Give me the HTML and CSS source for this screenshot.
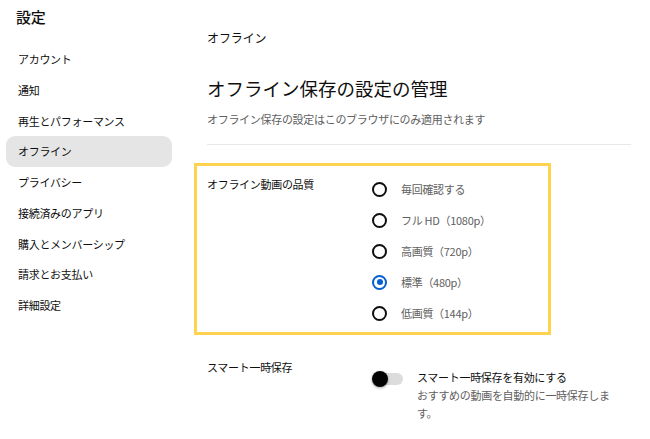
FILE: index.html
```html
<!DOCTYPE html>
<html lang="ja">
<head>
<meta charset="utf-8">
<link rel="stylesheet" href="styles.css">
</head>
<body>
<nav class="sidebar">
  <div class="side-title">設定</div>
  <ul class="menu">
    <li class="item">アカウント</li>
    <li class="item">通知</li>
    <li class="item">再生とパフォーマンス</li>
    <li class="item active">オフライン</li>
    <li class="item">プライバシー</li>
    <li class="item">接続済みのアプリ</li>
    <li class="item">購入とメンバーシップ</li>
    <li class="item">請求とお支払い</li>
    <li class="item">詳細設定</li>
  </ul>
</nav>
<main class="main">
  <div class="crumb">オフライン</div>
  <h1 class="heading">オフライン保存の設定の管理</h1>
  <p class="sub">オフライン保存の設定はこのブラウザにのみ適用されます</p>
  <hr class="divider">
  <section class="quality">
    <div class="label">オフライン動画の品質</div>
    <div class="options">
      <div class="opt"><span class="radio"></span><span class="opt-text">毎回確認する</span></div>
      <div class="opt"><span class="radio"></span><span class="opt-text">フル HD（1080p）</span></div>
      <div class="opt"><span class="radio"></span><span class="opt-text">高画質（720p）</span></div>
      <div class="opt"><span class="radio checked"></span><span class="opt-text">標準（480p）</span></div>
      <div class="opt"><span class="radio"></span><span class="opt-text">低画質（144p）</span></div>
    </div>
  </section>
  <section class="smart">
    <div class="label">スマート一時保存</div>
    <div class="smart-right">
      <span class="toggle"><span class="knob"></span></span>
      <div class="smart-text">
        <div class="smart-title">スマート一時保存を有効にする</div>
        <div class="smart-desc">おすすめの動画を自動的に一時保存します。</div>
      </div>
    </div>
  </section>
</main>
</body>
</html>
```
FILE: styles.css
```css
html, body {
  margin: 0;
  padding: 0;
  background: #fff;
}
body {
  display: flex;
  font-family: "Noto Sans CJK JP", "Noto Sans", sans-serif;
  color: #0f0f0f;
  width: 650px;
  height: 439px;
  overflow: hidden;
}
.sidebar {
  width: 207px;
  flex: none;
}
.side-title {
  font-size: 15px;
  font-weight: 500;
  line-height: 20px;
  padding: 7px 0 0 16px;
  letter-spacing: -0.3px;
}
.menu {
  list-style: none;
  margin: 17px 0 0 0;
  padding: 0;
}
.item {
  width: 166px;
  height: 30.75px;
  line-height: 30.75px;
  margin-left: 6px;
  padding-left: 12px;
  box-sizing: border-box;
  font-size: 11px;
  letter-spacing: -0.3px;
  color: #0f0f0f;
  border-radius: 9px;
}
.item.active {
  background: #e5e5e5;
}
.main {
  width: 424px;
  padding-top: 29px;
}
.crumb {
  font-size: 12px;
  line-height: 18px;
  letter-spacing: -0.1px;
}
.heading {
  margin: 28px 0 0 0;
  font-size: 18.5px;
  font-weight: 400;
  line-height: 26px;
  letter-spacing: 0;
}
.sub {
  margin: 10px 0 0 0;
  font-size: 11px;
  line-height: 16px;
  color: #606060;
  letter-spacing: -0.3px;
}
.divider {
  margin: 17px 0 0 0;
  border: 0;
  height: 1px;
  background: #e8e8e8;
}
.quality {
  margin: 18px 0 0 -13px;
  width: 357px;
  height: 172px;
  box-sizing: border-box;
  border: 3px solid #ffd24f;
  display: grid;
  grid-template-columns: 165px 1fr;
  padding-left: 10px;
}
.label {
  font-size: 11px;
  line-height: 16px;
  letter-spacing: -0.3px;
  color: #0f0f0f;
}
.quality .label {
  padding-top: 10px;
}
.options {
  padding-top: 7.5px;
}
.opt {
  height: 31px;
  display: flex;
  align-items: center;
  gap: 14px;
}
.radio {
  width: 15px;
  height: 15px;
  box-sizing: border-box;
  border: 2px solid #0f0f0f;
  border-radius: 50%;
  flex: none;
  position: relative;
}
.radio.checked {
  border-color: #065fd4;
}
.radio.checked::after {
  content: "";
  position: absolute;
  left: 2.5px;
  top: 2.5px;
  width: 6px;
  height: 6px;
  border-radius: 50%;
  background: #065fd4;
}
.opt-text {
  font-size: 11px;
  line-height: 16px;
  color: #606060;
  letter-spacing: -0.3px;
}
.smart {
  margin-top: 24px;
  display: grid;
  grid-template-columns: 165px 1fr;
}
.smart-right {
  display: flex;
  padding-top: 9px;
  gap: 13px;
}
.toggle {
  position: relative;
  width: 32px;
  height: 16px;
  margin-top: 3px;
  flex: none;
}
.toggle::before {
  content: "";
  position: absolute;
  left: 3px;
  top: 2px;
  width: 28px;
  height: 12px;
  border-radius: 6px;
  background: #dcdcdc;
}
.knob {
  position: absolute;
  left: 0;
  top: 0;
  width: 16px;
  height: 16px;
  border-radius: 50%;
  background: #030303;
  box-shadow: 0 1px 3px rgba(0,0,0,0.35);
}
.smart-title {
  font-size: 11px;
  line-height: 18px;
  color: #0f0f0f;
  letter-spacing: -0.3px;
}
.smart-desc {
  font-size: 11px;
  line-height: 18px;
  color: #606060;
  letter-spacing: -0.3px;
  width: 200px;
}
```
